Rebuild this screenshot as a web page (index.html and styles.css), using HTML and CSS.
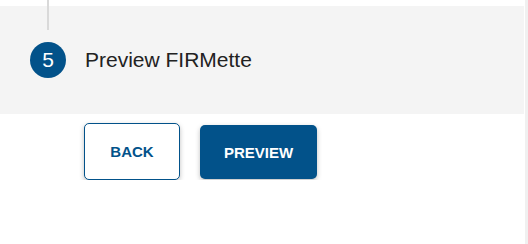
FILE: index.html
```html
<!DOCTYPE html>
<html lang="en">
<head>
<meta charset="utf-8">
<title>Preview FIRMette</title>
<link rel="stylesheet" href="styles.css">
</head>
<body>
<div class="page">
  <div class="step">
    <span class="connector"></span>
    <span class="step-num">5</span>
    <span class="step-title">Preview FIRMette</span>
  </div>
  <div class="actions">
    <button class="btn btn-outline" type="button">BACK</button>
    <button class="btn btn-solid" type="button">PREVIEW</button>
  </div>
</div>
<div class="scroll-edge"></div>
</body>
</html>
```
FILE: styles.css
```css
html, body {
  margin: 0;
  padding: 0;
  background: #ffffff;
  font-family: "Liberation Sans", Arial, sans-serif;
}

.page {
  width: 524px;
  padding-top: 6px;
}

.step {
  position: relative;
  height: 108px;
  background: #f4f4f4;
  display: flex;
  align-items: center;
  padding-left: 30px;
}

.connector {
  position: absolute;
  left: 47px;
  top: -6px;
  width: 2px;
  height: 30px;
  background: #d9d9d9;
}

.step-num {
  width: 36px;
  height: 36px;
  border-radius: 50%;
  background: #02528a;
  color: #ffffff;
  font-size: 21px;
  line-height: 36px;
  text-align: center;
}

.step-title {
  margin-left: 19px;
  font-size: 21px;
  color: #222222;
}

.actions {
  display: flex;
  align-items: flex-start;
  gap: 20px;
  padding-left: 84px;
  margin-top: 9px;
}

.btn {
  font-family: "Liberation Sans", Arial, sans-serif;
  font-weight: bold;
  font-size: 15px;
  border-radius: 5px;
  box-shadow: 0 2px 5px rgba(0, 0, 0, 0.25);
  padding: 0;
  cursor: pointer;
}

.btn-outline {
  width: 96px;
  height: 57px;
  background: #ffffff;
  color: #02528a;
  border: 1px solid #02528a;
}

.btn-solid {
  width: 117px;
  height: 54px;
  margin-top: 2px;
  background: #02528a;
  color: #ffffff;
  border: none;
}

.scroll-edge {
  position: fixed;
  top: 0;
  right: 0;
  width: 3px;
  height: 100%;
  background: #f0f0f0;
}
```
